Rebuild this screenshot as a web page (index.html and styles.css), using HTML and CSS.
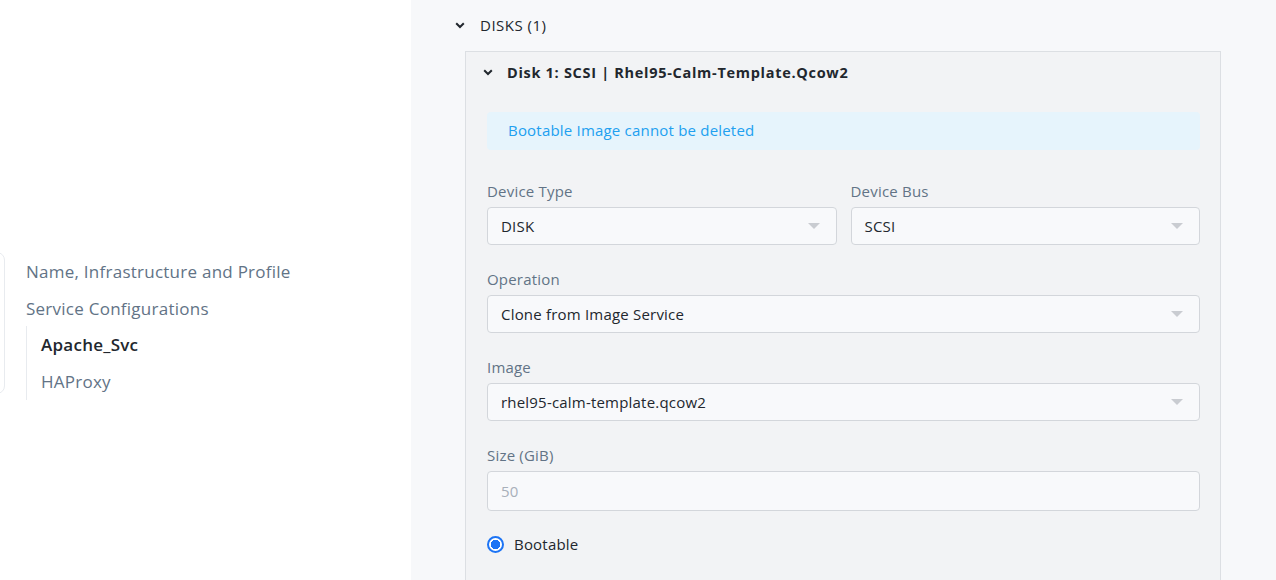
FILE: index.html
```html
<!DOCTYPE html>
<html>
<head>
<meta charset="utf-8">
<link rel="stylesheet" href="styles.css">
</head>
<body>
<div class="page">
  <aside class="sidebar">
    <div class="nav-box">
      <div class="nav-item">Name, Infrastructure and Profile</div>
      <div class="nav-item">Service Configurations</div>
      <div class="nav-sub">
        <div class="nav-subitem active">Apache_Svc</div>
        <div class="nav-subitem">HAProxy</div>
      </div>
    </div>
  </aside>
  <main class="content">
    <div class="section-head">
      <svg class="chev" width="10" height="7" viewBox="0 0 10 7"><path d="M1.2 1.2 L5 5 L8.8 1.2" fill="none" stroke="#22272e" stroke-width="2"/></svg>
      <span>DISKS (1)</span>
    </div>
    <div class="disk-card">
      <div class="disk-head">
        <svg class="chev" width="10" height="7" viewBox="0 0 10 7"><path d="M1.2 1.2 L5 5 L8.8 1.2" fill="none" stroke="#22272e" stroke-width="2"/></svg>
        <span>Disk 1: SCSI | Rhel95-Calm-Template.Qcow2</span>
      </div>
      <div class="disk-body">
        <div class="info">Bootable Image cannot be deleted</div>
        <div class="row2">
          <div class="field">
            <div class="label">Device Type</div>
            <div class="select"><span>DISK</span><i class="caret"></i></div>
          </div>
          <div class="field">
            <div class="label">Device Bus</div>
            <div class="select"><span>SCSI</span><i class="caret"></i></div>
          </div>
        </div>
        <div class="field">
          <div class="label">Operation</div>
          <div class="select"><span>Clone from Image Service</span><i class="caret"></i></div>
        </div>
        <div class="field">
          <div class="label">Image</div>
          <div class="select"><span>rhel95-calm-template.qcow2</span><i class="caret"></i></div>
        </div>
        <div class="field">
          <div class="label">Size (GiB)</div>
          <div class="input disabled">50</div>
        </div>
        <label class="radio"><span class="dot"></span><span>Bootable</span></label>
      </div>
    </div>
  </main>
</div>
</body>
</html>
```

FILE: styles.css
```css
* { box-sizing: border-box; }
html, body { margin: 0; padding: 0; }
body {
  font-family: "Open Sans", Lato, sans-serif;
  background: #f7f8fa;
  color: #22272e;
  width: 1276px;
  height: 580px;
  overflow: hidden;
}
.page { display: flex; height: 580px; }
.sidebar {
  width: 411px;
  flex: none;
  background: #ffffff;
  padding-top: 252px;
}
.nav-box {
  margin-left: -20px;
  width: 25px;
  height: 142px;
  border: 1px solid #e8ebef;
  border-radius: 8px;
}
.nav-item, .nav-sub { position: relative; }
.nav-box > .nav-item,
.nav-box > .nav-sub { left: 45px; width: 360px; }
.nav-item {
  font-size: 17px;
  letter-spacing: 0.25px;
  color: #627386;
  height: 37px;
  line-height: 37px;
  white-space: nowrap;
}
.nav-sub {
  border-left: 1px solid #e8ebef;
  padding-left: 14px;
  top: -1px;
}
.nav-subitem {
  font-size: 17px;
  letter-spacing: 0.25px;
  color: #627386;
  height: 37px;
  line-height: 37px;
}
.nav-subitem.active { color: #22272e; font-weight: 600; }

.content { flex: 1; padding-left: 43px; }
.section-head {
  display: flex;
  align-items: center;
  gap: 15px;
  height: 51px;
  padding-left: 1px;
  padding-bottom: 1px;
  font-size: 15px;
  color: #22272e;
  letter-spacing: 0.5px;
}
.disk-card {
  width: 756px;
  margin-left: 11px;
  background: #f2f3f5;
  border: 1px solid #dcdfe3;
  border-bottom: none;
  height: 540px;
}
.disk-head {
  display: flex;
  align-items: center;
  gap: 14px;
  height: 40px;
  padding-left: 17px;
  font-size: 14.5px;
  font-weight: 700;
  color: #22272e;
  letter-spacing: 0.7px;
}
.disk-body { padding: 20px 20px 0 21px; }
.info {
  height: 38px;
  background: #e6f4fc;
  border-radius: 4px;
  color: #21a0f0;
  font-size: 15px;
  letter-spacing: 0.2px;
  line-height: 37px;
  padding-left: 21px;
  margin-bottom: 7px;
}
.row2 { display: flex; gap: 14px; }
.row2 .field { flex: 1; }
.field { padding-top: 26px; }
.label {
  font-size: 15px;
  letter-spacing: 0.2px;
  color: #627386;
  height: 17px;
  line-height: 16px;
  margin-bottom: 7px;
}
.select, .input {
  height: 38px;
  background: #f8f9fb;
  border: 1px solid #d3d6db;
  border-radius: 4px;
  display: flex;
  align-items: center;
  justify-content: space-between;
  padding: 0 16px 0 13px;
  font-size: 15px;
  letter-spacing: 0.2px;
  color: #22272e;
}
.input { height: 40px; }
.input.disabled { color: #a8b0ba; padding-left: 13px; }
.caret {
  width: 0; height: 0;
  border-left: 6px solid transparent;
  border-right: 6px solid transparent;
  border-top: 6px solid #c9ccd1;
}
.radio {
  display: flex;
  align-items: center;
  gap: 10px;
  height: 20px;
  margin-top: 23px;
  font-size: 15px;
  letter-spacing: 0.2px;
  color: #22272e;
}
.dot {
  width: 17px; height: 17px;
  border-radius: 50%;
  border: 2px solid #1d74f5;
  background: radial-gradient(circle, #1d74f5 0 4.5px, #ffffff 5px);
}
```
